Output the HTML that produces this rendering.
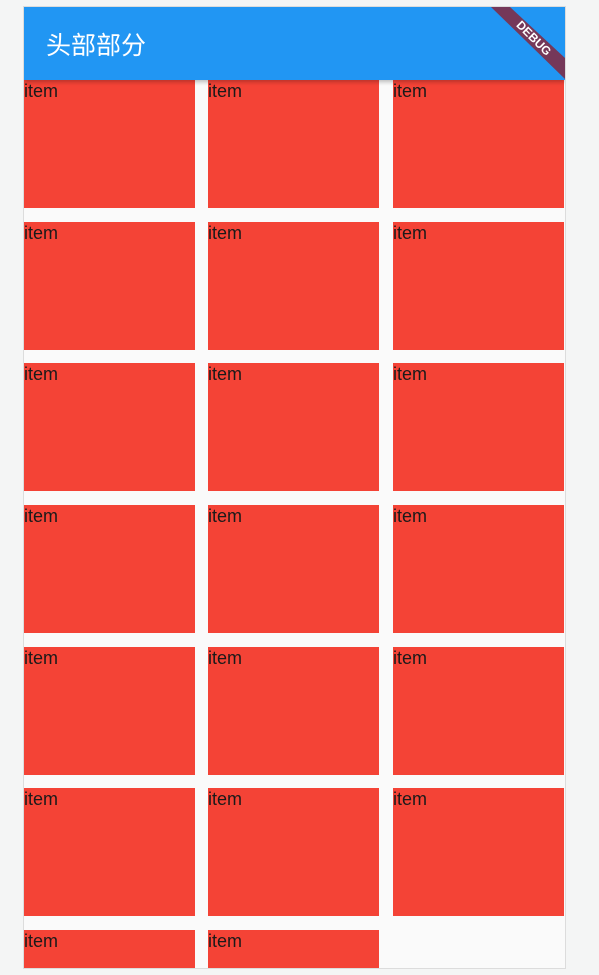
<!DOCTYPE html>
<html><head><meta charset="utf-8"><style>
html,body{margin:0;padding:0;}
body{width:599px;height:975px;background:#f4f5f5;position:relative;overflow:hidden;font-family:"Liberation Sans","Noto Sans CJK SC",sans-serif;}
.frame{position:absolute;left:23px;top:6px;width:541px;height:961px;background:#fafafa;border:1px solid #dcdcdc;overflow:hidden;}
.bar{position:absolute;left:0;top:0;width:100%;height:73px;background:#2196F3;box-shadow:0 2px 4px rgba(0,0,0,.25);z-index:2;}
.bar span{position:absolute;left:22px;top:22px;color:#fff;font-size:25px;line-height:30px;font-family:"Noto Sans CJK SC",sans-serif;}
.it{position:absolute;width:171px;height:128px;background:#F44336;color:#1a1a1a;font-size:18px;line-height:22px;overflow:hidden;}
svg{position:absolute;left:0;top:0;z-index:3;}
</style></head><body>
<div class="frame">
<div class="bar"><span>头部部分</span></div>
<div class="it" style="left:0;top:73px">item</div><div class="it" style="left:184px;top:73px">item</div><div class="it" style="left:369px;top:73px">item</div>
<div class="it" style="left:0;top:215px">item</div><div class="it" style="left:184px;top:215px">item</div><div class="it" style="left:369px;top:215px">item</div>
<div class="it" style="left:0;top:356px">item</div><div class="it" style="left:184px;top:356px">item</div><div class="it" style="left:369px;top:356px">item</div>
<div class="it" style="left:0;top:498px">item</div><div class="it" style="left:184px;top:498px">item</div><div class="it" style="left:369px;top:498px">item</div>
<div class="it" style="left:0;top:640px">item</div><div class="it" style="left:184px;top:640px">item</div><div class="it" style="left:369px;top:640px">item</div>
<div class="it" style="left:0;top:781px">item</div><div class="it" style="left:184px;top:781px">item</div><div class="it" style="left:369px;top:781px">item</div>
<div class="it" style="left:0;top:923px;height:38px">item</div><div class="it" style="left:184px;top:923px;height:38px">item</div>
</div>
<svg width="599" height="975">
<polygon points="491,7 510,7 565,58 565,79" fill="#7a3350" fill-opacity="0.95"/>
<text x="0" y="0" transform="translate(531,41) rotate(45)" text-anchor="middle" fill="#fff" font-size="12" font-weight="bold" font-family="Liberation Sans,sans-serif">DEBUG</text>
</svg>
</body></html>
